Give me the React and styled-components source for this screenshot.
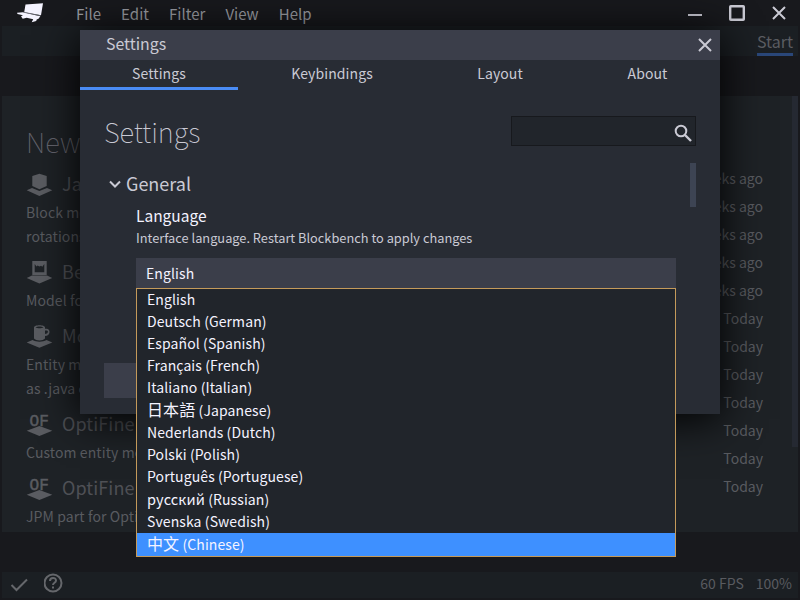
import React from "react";
import styled, { createGlobalStyle } from "styled-components";

const Global = createGlobalStyle`
  *, *::before, *::after { box-sizing: border-box; }
  body { margin: 0; background: #17181c; overflow: hidden; }
  h1, h2, h3, p, ul { margin: 0; padding: 0; font-weight: inherit; list-style: none; }
`;

const Window = styled.div`
  position: relative;
  display: flex;
  flex-direction: column;
  width: 800px;
  height: 600px;
  overflow: hidden;
  background: #18191d;
  color: #595b60;
  font: 15px/24px "Noto Sans CJK SC", "Noto Sans", sans-serif;
  white-space: nowrap;
`;

const TitleBar = styled.header`
  display: flex;
  flex: none;
  align-items: center;
  height: 26px;
  padding-left: 16px;
  color: #9b9da3;
`;

const Logo = styled.svg`
  width: 28px;
  height: 20px;
  margin-right: 32px;
`;

const Menu = styled.nav`
  display: flex;
  gap: 20px;
  font-size: 15px;
  letter-spacing: 0.03px;
  flex: 1;
  height: 26px;
  line-height: 28px;
`;

const WindowControls = styled.div`
  display: flex;
  align-items: center;
  width: 112px;
  height: 26px;
`;

const ControlIcon = styled.svg`
  width: 112px;
  height: 26px;
  fill: none;
  stroke: #cacad4;
  stroke-width: 2;
`;

const ModeBar = styled.div`
  display: flex;
  flex: none;
  justify-content: flex-end;
  height: 30px;
  margin: 0 2px;
  padding-right: 5px;
  background: #1b1f23;
`;

const ModeTab = styled.div`
  width: 36px;
  height: 30px;
  border-bottom: 3px solid #2a4779;
  color: #5b5d62;
  font-size: 16px;
  line-height: 30px;
`;

const StartScreen = styled.main`
  display: flex;
  justify-content: space-between;
  height: 436px;
  margin: 40px 2px;
  background: #1e2226;
`;

const Formats = styled.section`
  width: 360px;
  padding: 27px 0 0 24px;
`;

const FormatsHeading = styled.h2`
  height: 45px;
  font-size: 27.5px;
  font-weight: 100;
  line-height: 36px;
  color: #65656e;
`;

const Format = styled.article`
  margin-bottom: 8px;
  font-size: 14px;
  letter-spacing: 0.1px;
`;

const FormatTitle = styled.h3`
  display: flex;
  gap: 9px;
  height: 32px;
  padding-top: 3px;
  font-size: 18px;
  line-height: 24px;
  color: #4e5055;
`;

const FormatIcon = styled.svg`
  width: 27px;
  height: 26px;
  fill: #5a5c61;
`;

const Recent = styled.section`
  display: flex;
  width: 120px;
`;

const RecentList = styled.ul`
  flex: 1;
  padding: 68px 29px 0 0;
  font-size: 14px;
  line-height: 28px;
  text-align: right;
`;

const PageScroll = styled.div`
  width: 6px;
  height: 351px;
  background: #252932;
`;

const StatusBar = styled.footer`
  display: flex;
  align-items: center;
  height: 26px;
  margin: 0 2px;
  padding: 0 6px 4px 8px;
  background: #1b1f23;
  font-size: 14px;
  gap: 12px;
`;

const StatusIcon = styled.svg`
  width: 22px;
  height: 22px;
  fill: none;
  stroke: #65676b;
  stroke-width: 2;
`;

const Spacer = styled.div`
  flex: 1;
`;

const Dialog = styled.div`
  position: absolute;
  left: 80px;
  top: 30px;
  width: 640px;
  height: 384px;
  background: #282c34;
  color: #cacad4;
  box-shadow: 0 5px 40px #000;
`;

const DialogBar = styled.header`
  display: flex;
  align-items: center;
  justify-content: space-between;
  height: 30px;
  padding: 0 8px 0 26px;
  background: #3b3e4a;
  font-size: 15.9px;
  line-height: 26px;
`;

const DialogName = styled.span`
  height: 29px;
`;

const CloseIcon = styled.svg`
  width: 14px;
  height: 14px;
  stroke: #cacad4;
  stroke-width: 2;
`;

const Tabs = styled.div`
  display: grid;
  grid-template-columns: 158px 188px 148px 147px;
  height: 30px;
`;

const Tab = styled.div`
  border-bottom: 3px solid ${(p) => (p.$active ? "#4a8cf5" : "transparent")};
  font-size: 14px;
  letter-spacing: 0.1px;
  line-height: 27px;
  text-align: center;
`;

const DialogHead = styled.div`
  display: flex;
  justify-content: space-between;
  padding: 26px 24px 0;
  height: 73px;
`;

const PageTitle = styled.h1`
  font-size: 27.5px;
  font-weight: 100;
  letter-spacing: -0.1px;
  line-height: 30px;
`;

const Search = styled.div`
  display: flex;
  align-items: center;
  justify-content: flex-end;
  width: 185px;
  height: 30px;
  padding: 3px 3px 0 0;
  border: 1px solid #17191d;
  background: #21252b;
`;

const SearchIcon = styled.svg`
  width: 18px;
  height: 18px;
  fill: none;
  stroke: #cacad4;
  stroke-width: 2;
`;

const SettingsList = styled.section`
  display: flex;
  justify-content: space-between;
  height: 200px;
  padding: 0 24px;
`;

const Category = styled.div`
  width: 572px;
`;

const CategoryTitle = styled.h2`
  display: flex;
  align-items: center;
  height: 42px;
  padding-left: 5px;
  gap: 5px;
  font-size: 18px;
`;

const CategoryName = styled.span`
  height: 26px;
`;

const Chevron = styled.svg`
  width: 12px;
  height: 8px;
  fill: none;
  stroke: #cacad4;
  stroke-width: 2;
`;

const Setting = styled.div`
  padding-left: 32px;
`;

const SettingName = styled.h3`
  height: 21px;
  color: #f4f3ff;
  font-size: 15.5px;
  line-height: 20px;
`;

const SettingInfo = styled.p`
  height: 32px;
  font-size: 12.8px;
  line-height: 24px;
`;

const Select = styled.div`
  position: relative;
  height: 30px;
  padding-left: 10px;
  background: #3b3e4a;
  color: #f4f3ff;
  font-size: 14px;
  letter-spacing: 0.1px;
  line-height: 30px;
`;

const Options = styled.ul`
  position: absolute;
  top: 30px;
  left: 0;
  width: 540px;
  border: 1px solid #c49a5a;
  background: #21252b;
  z-index: 2;
`;

const Option = styled.li`
  height: ${(p) => (p.$tall ? 23 : 22)}px;
  padding-left: 10px;
  line-height: ${(p) => (p.$tall ? 23 : 20)}px;
  background: ${(p) => (p.$selected ? "#3e90ff" : "transparent")};
`;

const NativeScript = styled.span`
  font-size: ${(p) => (p.$cyrillic ? 14.5 : 16)}px;
  line-height: 0;
`;

const ListScroll = styled.div`
  width: 6px;
  height: 44px;
  background: #3d4453;
`;

const DialogButton = styled.button`
  display: block;
  width: 100px;
  height: 35px;
  margin-left: 24px;
  border: 0;
  background: #3b3e4a;
`;

const IconLetters = styled.text`
  font: 17px "Liberation Mono", monospace;
  stroke: #5a5c61;
  stroke-width: 0.5;
`;

const drawings = {
  block: (
    <path d="M13.400 2.700l7.300 2.300v10l-7.300 3.300-7.100-3.300V5zM6 17l-5.300 2.300L13.400 25l12.900-5.700L21 17l-7.600 3z" />
  ),
  portrait: (
    <path
      fillRule="evenodd"
      d="M6.300 2h14.400v14H6.300zM8.700 5v8.300h9.600V5l-2 2.800-1.300-1-1.500.8-2-1-1 1zM6 16.500L.7 19l12.700 5.500L26.300 19 21 16.500z"
    />
  ),
  mug: (
    <path
      fillRule="evenodd"
      d="M8 4.500c0-3 11-3 11 0v1.200h1.500c4.500 0 4 7.300-1.500 7.300v2.500c-2 2.500-9 2.500-11 0zM19 7.500V11c3 0 4-3.500 1.500-3.500zM9.500 4.500c2 1 6 1 8 0-2-1.400-6-1.400-8 0zM6.500 17l-5.800 2.600 12.700 5.200 12.900-5.200-5.800-2.600c-4 2.300-10 2.300-14 0z"
    />
  ),
  optifine: (
    <>
      <IconLetters x="3.500" y="14.500" textLength="19.500" lengthAdjust="spacingAndGlyphs">
        OF
      </IconLetters>
      <path d="M13.400 15l12.900 4.700-12.900 5.300L.7 19.700z" />
    </>
  ),
};

const formats = [
  { name: "Java Block/Item", icon: "block", info: ["Block model for Java Edition", "rotations are limited"] },
  { name: "Bedrock Model", icon: "portrait", info: ["Model for Bedrock Edition"] },
  { name: "Modded Entity", icon: "mug", info: ["Entity model for mods", "as .java class"] },
  { name: "OptiFine Entity", icon: "optifine", info: ["Custom entity model"] },
  { name: "OptiFine Part", icon: "optifine", info: ["JPM part for OptiFine"] },
];

const recent = [...Array(5).fill("3 weeks ago"), ...Array(7).fill("Today")];

const languages = [
  { name: "English" },
  { name: "Deutsch (German)" },
  { name: "Español (Spanish)" },
  { name: "Français (French)" },
  { name: "Italiano (Italian)" },
  { native: "日本語", name: " (Japanese)", tall: true },
  { name: "Nederlands (Dutch)" },
  { name: "Polski (Polish)" },
  { name: "Português (Portuguese)" },
  { native: "русский", name: " (Russian)", tall: true, cyrillic: true },
  { name: "Svenska (Swedish)" },
  { native: "中文", name: " (Chinese)", tall: true, selected: true },
];

export default function App() {
  return (
    <Window>
      <Global />
      <TitleBar>
        <Logo viewBox="0 0 28 20" fill="#f4f3ff">
          <path d="M9.500 1.500L27 .3l-2 11.900-16.800-3z" />
          <path d="M1 9.700l6-.4 17.300 4-1.800 2.500-1.800.7-.5 1.500-4.500 1.200 1.500-3-6.500-1.400-4 1L5 13.300l2-1-5.500-1.300z" />
          <path d="M7.500 9.200l17 3.500" stroke="#6d6e78" strokeWidth=".8" />
        </Logo>
        <Menu>
          {["File", "Edit", "Filter", "View", "Help"].map((m) => (
            <span key={m}>{m}</span>
          ))}
        </Menu>
        <WindowControls>
          <ControlIcon viewBox="0 0 112 26">
            <path d="M0 15h14M85 7l12 12M97 7L85 19" />
            <rect x="42.200" y="6.200" width="13.600" height="13.600" rx=".6" strokeWidth="2.400" />
          </ControlIcon>
        </WindowControls>
      </TitleBar>
      <ModeBar>
        <ModeTab>Start</ModeTab>
      </ModeBar>
      <StartScreen>
        <Formats>
          <FormatsHeading>New</FormatsHeading>
          {formats.map((f) => (
            <Format key={f.name}>
              <FormatTitle>
                <FormatIcon viewBox="0 0 27 26">{drawings[f.icon]}</FormatIcon>
                {f.name}
              </FormatTitle>
              {f.info.map((line) => (
                <p key={line}>{line}</p>
              ))}
            </Format>
          ))}
        </Formats>
        <Recent>
          <RecentList>
            {recent.map((r, i) => (
              <li key={i}>{r}</li>
            ))}
          </RecentList>
          <PageScroll />
        </Recent>
      </StartScreen>
      <StatusBar>
        <StatusIcon viewBox="0 0 22 22">
          <path d="M1.500 13l5 5L17 7.500" />
        </StatusIcon>
        <StatusIcon viewBox="2 0 22 22">
          <circle cx="11" cy="11" r="8.500" />
          <path d="M8 9c0-4 6-4 6-.5 0 2.500-3 2-3 4.500M11 14.500v2" />
        </StatusIcon>
        <Spacer />
        <span>60 FPS</span>
        <span>100%</span>
      </StatusBar>
      <Dialog>
        <DialogBar>
          <DialogName>Settings</DialogName>
          <CloseIcon viewBox="0 0 14 14">
            <path d="M1 1l12 12M13 1L1 13" />
          </CloseIcon>
        </DialogBar>
        <Tabs>
          <Tab $active>Settings</Tab>
          <Tab>Keybindings</Tab>
          <Tab>Layout</Tab>
          <Tab>About</Tab>
        </Tabs>
        <DialogHead>
          <PageTitle>Settings</PageTitle>
          <Search>
            <SearchIcon viewBox="0 0 18 18">
              <circle cx="7" cy="7" r="5.300" />
              <path d="M11 11l6 6" strokeWidth="2.400" />
            </SearchIcon>
          </Search>
        </DialogHead>
        <SettingsList>
          <Category>
            <CategoryTitle>
              <Chevron viewBox="0 0 12 8">
                <path d="M1 1.500l5 5 5-5" />
              </Chevron>
              <CategoryName>General</CategoryName>
            </CategoryTitle>
            <Setting>
              <SettingName>Language</SettingName>
              <SettingInfo>Interface language. Restart Blockbench to apply changes</SettingInfo>
              <Select>
                English
                <Options>
                  {languages.map((l) => (
                    <Option key={l.name} $tall={l.tall} $selected={l.selected}>
                      {l.native && <NativeScript $cyrillic={l.cyrillic}>{l.native}</NativeScript>}
                      {l.name}
                    </Option>
                  ))}
                </Options>
              </Select>
            </Setting>
          </Category>
          <ListScroll />
        </SettingsList>
        <DialogButton aria-label="Close" />
      </Dialog>
    </Window>
  );
}
